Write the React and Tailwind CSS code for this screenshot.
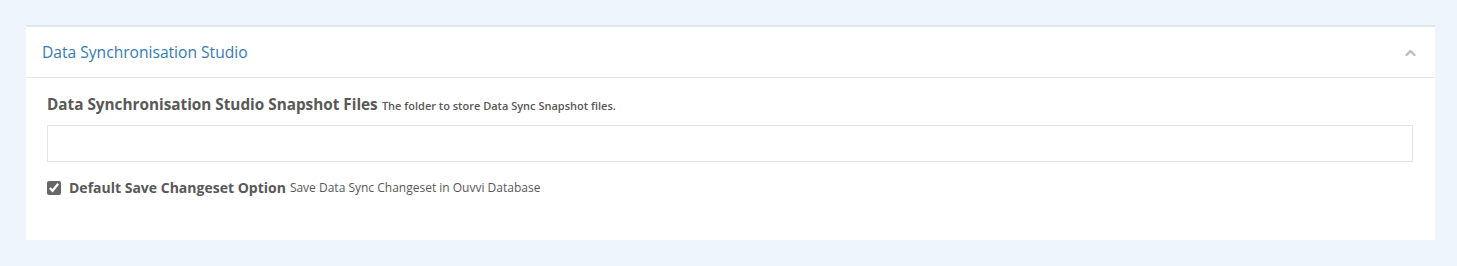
import { useState } from 'react'

export default function App() {
  const [open, setOpen] = useState(true)
  const [folder, setFolder] = useState('')
  const [saveChangeset, setSaveChangeset] = useState(true)

  return (
    <div className="min-h-[266px] bg-[#eef5fc] pt-[25px] pl-[26px] pr-[22px] pb-[26px] font-['Open_Sans',sans-serif]">
      <div className="bg-white border-t-2 border-[#e1e7ec]">
        <div className="flex items-center justify-between h-[51px] pl-4 pr-[19px] border-b border-[#e6e6e6]">
          <h3 className="text-[15.6px] text-[#337ab7] pt-[1px]">Data Synchronisation Studio</h3>
          <button onClick={() => setOpen(o => !o)} className="text-[#bdbdbd] pt-[2px]">
            <svg width="11" height="8" viewBox="0 0 11 8" fill="none" stroke="currentColor" strokeWidth="2.4" strokeLinecap="round" strokeLinejoin="round">
              {open ? <path d="M1.5 6 5.5 2l4 4" /> : <path d="M1.5 2l4 4 4-4" />}
            </svg>
          </button>
        </div>
        {open && (
          <div className="pl-[21px] pr-[22px] pt-[16px] pb-[42px]">
            <div className="text-[#585858] leading-5">
              <span className="text-[15.3px] font-bold">Data Synchronisation Studio Snapshot Files</span>{' '}
              <span className="text-[11px] font-semibold">The folder to store Data Sync Snapshot files.</span>
            </div>
            <input
              value={folder}
              onChange={e => setFolder(e.target.value)}
              className="block w-full h-[37px] mt-[9px] px-3 border border-[#e5e5e5] text-[13px] text-[#555] outline-none"
            />
            <label className="flex items-center mt-[15px] text-[#585858] cursor-pointer">
              <input
                type="checkbox"
                checked={saveChangeset}
                onChange={e => setSaveChangeset(e.target.checked)}
                className="w-[14px] h-[14px] m-0 accent-[#666]"
              />
              <span className="ml-2 text-[14px] font-bold">Default Save Changeset Option</span>
              <span className="ml-1 text-[12px]">Save Data Sync Changeset in Ouvvi Database</span>
            </label>
          </div>
        )}
      </div>
    </div>
  )
}
